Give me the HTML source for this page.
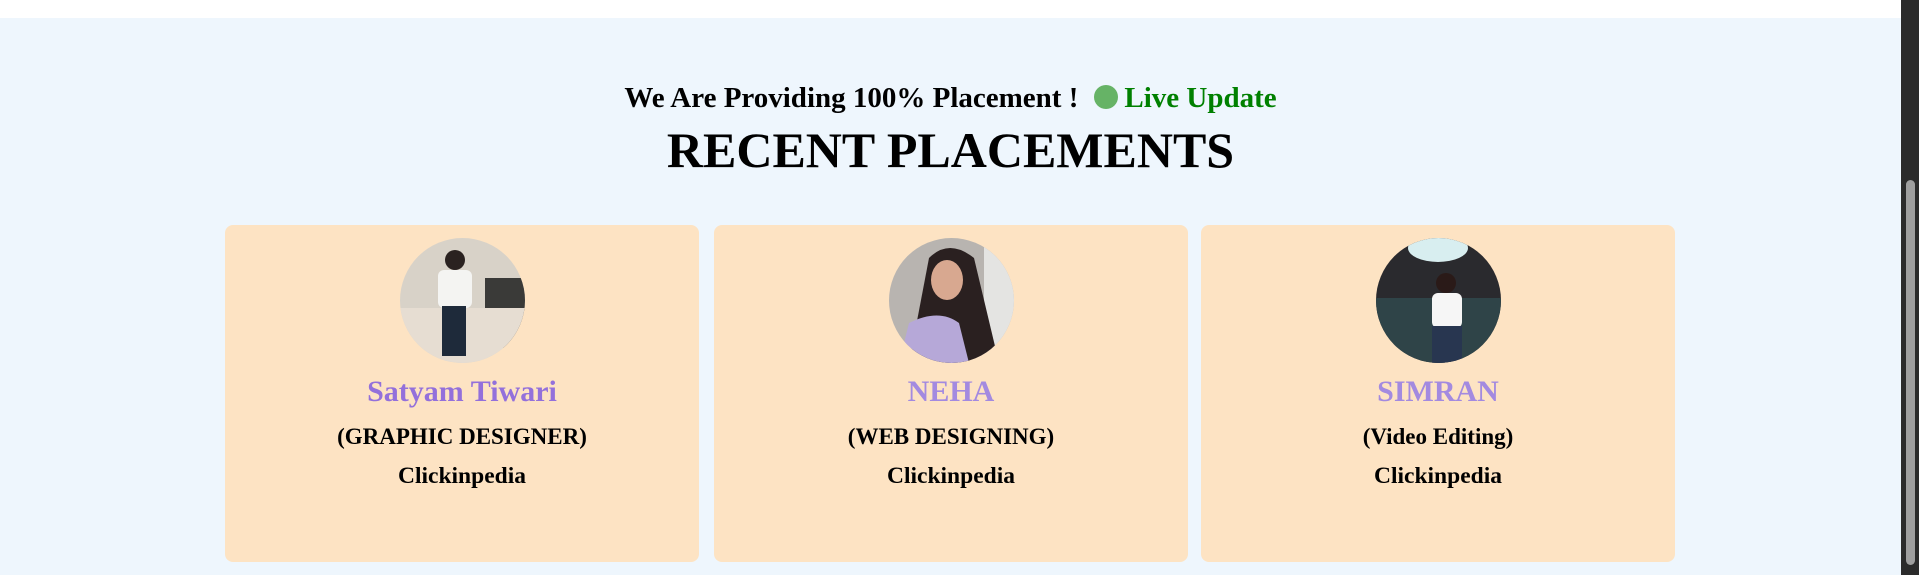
<!DOCTYPE html>
<html><head><meta charset="utf-8"><style>
html,body{margin:0;padding:0;width:1919px;height:575px;overflow:hidden;background:#eef6fd;font-family:"Liberation Serif",serif;}
.top{position:absolute;left:0;top:0;width:1901px;height:18px;background:#fff;}
.sb{position:absolute;right:0;top:0;width:18px;height:575px;background:#2b2b2b;}
.thumb{position:absolute;right:4px;top:180px;width:9px;height:385px;background:#9f9f9f;border-radius:5px;}
.h1{position:absolute;left:0;width:1901px;top:80px;text-align:center;font-weight:bold;font-size:29px;line-height:36px;}
.dot{display:inline-block;width:24px;height:24px;border-radius:50%;background:#66b366;vertical-align:-2px;margin:0 6px 0 16px;}
.live{color:#008000;}
.h2{position:absolute;left:0;width:1901px;top:118px;text-align:center;font-weight:bold;font-size:50px;line-height:64px;}
.card{position:absolute;top:225px;width:474px;height:337px;background:#fde3c3;border-radius:8px;text-align:center;}
.av{position:absolute;left:175px;top:13px;width:125px;height:125px;border-radius:50%;overflow:hidden;}
.nm{position:absolute;left:0;right:0;top:147px;font-size:30px;font-weight:bold;color:#9370db;line-height:40px;}
.rl{position:absolute;left:0;right:0;top:197px;font-size:23px;font-weight:bold;line-height:30px;}
.co{position:absolute;left:0;right:0;top:236px;font-size:23.5px;font-weight:bold;line-height:30px;}
</style></head><body>
<div class="top"></div>
<div class="h1">We Are Providing 100% Placement !<span class="dot"></span><span class="live">Live Update</span></div>
<div class="h2">RECENT PLACEMENTS</div>

<div class="card" style="left:225px">
 <div class="av"><svg width="125" height="125"><rect width="125" height="125" fill="#d8d2c8"/><rect x="85" y="40" width="40" height="70" fill="#3a3a38"/><rect x="0" y="70" width="125" height="55" fill="#e6ddd2"/><circle cx="55" cy="22" r="10" fill="#2a2220"/><rect x="38" y="32" width="34" height="38" rx="6" fill="#f4f4f2"/><rect x="42" y="68" width="24" height="50" fill="#1e2a3a"/></svg></div>
 <div class="nm">Satyam Tiwari</div><div class="rl">(GRAPHIC DESIGNER)</div><div class="co">Clickinpedia</div>
</div>
<div class="card" style="left:714px">
 <div class="av"><svg width="125" height="125"><rect width="125" height="125" fill="#b8b4b0"/><rect x="95" y="0" width="30" height="125" fill="#e4e4e2"/><path d="M40 20 Q60 0 85 20 L110 125 L20 125 Z" fill="#2a2020"/><ellipse cx="58" cy="42" rx="16" ry="20" fill="#d8a890"/><path d="M10 125 L20 85 Q50 70 70 85 L80 125 Z" fill="#b6a8d8"/></svg></div>
 <div class="nm" style="color:#a38ae0">NEHA</div><div class="rl">(WEB DESIGNING)</div><div class="co">Clickinpedia</div>
</div>
<div class="card" style="left:1201px">
 <div class="av"><svg width="125" height="125"><rect width="125" height="125" fill="#2a2a2e"/><ellipse cx="62" cy="10" rx="30" ry="14" fill="#d8eef0"/><rect x="0" y="60" width="125" height="65" fill="#2f4448"/><circle cx="70" cy="45" r="10" fill="#2a1a18"/><rect x="56" y="55" width="30" height="35" rx="6" fill="#f6f6f6"/><rect x="56" y="88" width="30" height="37" fill="#283650"/></svg></div>
 <div class="nm" style="color:#a38ae0">SIMRAN</div><div class="rl">(Video Editing)</div><div class="co">Clickinpedia</div>
</div>
<div class="sb"><div class="thumb"></div></div>
</body></html>
